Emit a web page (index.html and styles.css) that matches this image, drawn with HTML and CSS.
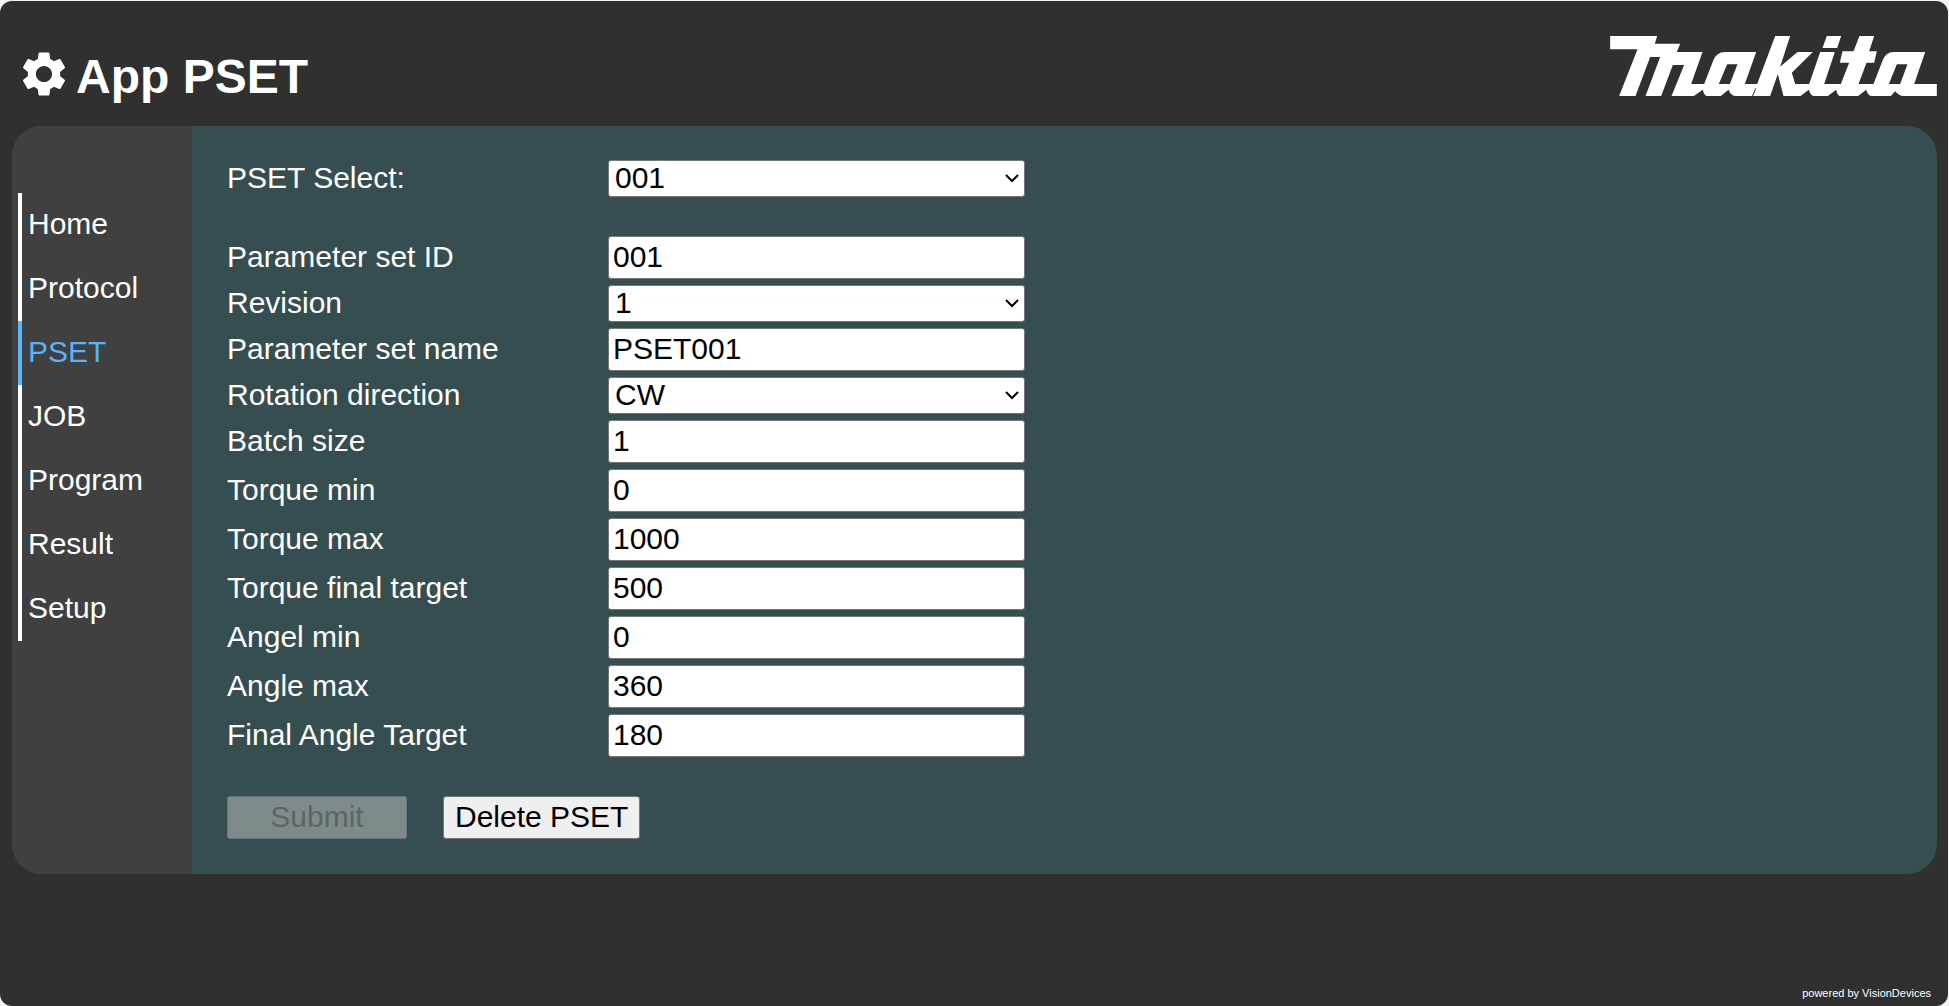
FILE: index.html
```html
<!DOCTYPE html>
<html lang="en">
<head>
<meta charset="utf-8">
<title>App PSET</title>
<link rel="stylesheet" href="styles.css">
</head>
<body>
<div class="app">
  <header class="header">
    <svg class="gear" viewBox="0 0 24 24" aria-hidden="true"><path d="M19.14,12.94c0.04-0.3,0.06-0.61,0.06-0.94c0-0.32-0.02-0.64-0.07-0.94l2.03-1.58c0.18-0.14,0.23-0.41,0.12-0.61l-1.92-3.32c-0.12-0.22-0.37-0.29-0.59-0.22l-2.39,0.96c-0.5-0.38-1.03-0.7-1.62-0.94L14.4,2.81c-0.04-0.24-0.24-0.41-0.48-0.41h-3.84c-0.24,0-0.43,0.17-0.47,0.41L9.25,5.35C8.66,5.59,8.12,5.92,7.63,6.29L5.24,5.33c-0.22-0.08-0.47,0-0.59,0.22L2.74,8.87C2.62,9.08,2.66,9.34,2.86,9.48l2.03,1.58C4.84,11.36,4.8,11.69,4.8,12s0.02,0.64,0.07,0.94l-2.03,1.58c-0.18,0.14-0.23,0.41-0.12,0.61l1.92,3.32c0.12,0.22,0.37,0.29,0.59,0.22l2.39-0.96c0.5,0.38,1.03,0.7,1.62,0.94l0.36,2.54c0.05,0.24,0.24,0.41,0.48,0.41h3.84c0.24,0,0.44-0.17,0.47-0.41l0.36-2.54c0.59-0.24,1.13-0.56,1.62-0.94l2.39,0.96c0.22,0.08,0.47,0,0.59-0.22l1.92-3.32c0.12-0.22,0.07-0.47-0.12-0.61L19.14,12.94z M12,15.6c-1.98,0-3.6-1.62-3.6-3.6s1.62-3.6,3.6-3.6s3.6,1.62,3.6,3.6S13.98,15.6,12,15.6z"/></svg>
    <h1 class="title">App PSET</h1>
    <svg class="logo" viewBox="60 108 980 180" role="img" aria-label="Makita"><path fill-rule="evenodd" d="M60 108H201L194 131H270L260 156H337L303 252H342L369 182Q379 156 404 156H498L464 252H501L555 108H600L570 200L622 156H668L605 218L615 252H657L690 156H734L702 252H752L777 188H749L757 154H790L808 108H852L837 154H860L852 188H829L805 252H850L877 182Q887 156 910 156H1005L972 252H1040V288H940Q927 288 915 274L902 288H845Q834 288 828 269L804 288H750Q742 288 738 269L713 288H672Q662 288 656 269L631 288H580L563 222L540 288H437Q423 288 415 269L392 288H352Q342 288 338 269L311 288H244L282 195H248L213 288H166L210 171H180L136 288H87L142 148H60ZM411 193L386 252H419L442 193ZM920 193L896 252H930L952 193ZM710 108H753L741 144H697Z"/><path class="logo-cut" d="M497 265L487 288"/></svg>
  </header>

  <div class="panel">
    <nav class="sidebar">
      <a class="nav-link" href="#home">Home</a>
      <a class="nav-link" href="#protocol">Protocol</a>
      <a class="nav-link active" href="#pset" aria-current="page">PSET</a>
      <a class="nav-link" href="#job">JOB</a>
      <a class="nav-link" href="#program">Program</a>
      <a class="nav-link" href="#result">Result</a>
      <a class="nav-link" href="#setup">Setup</a>
    </nav>

    <main class="content">
      <form class="form">
        <div class="fields">
          <label for="select">PSET Select:</label>
          <select id="select"><option>001</option></select>
        </div>
        <div class="fields">
          <label for="id">Parameter set ID</label>
          <input id="id" type="text" value="001">
          <label for="revision">Revision</label>
          <select id="revision"><option>1</option></select>
          <label for="name">Parameter set name</label>
          <input id="name" type="text" value="PSET001">
          <label for="rotation">Rotation direction</label>
          <select id="rotation"><option>CW</option><option>CCW</option></select>
          <label for="batch">Batch size</label>
          <input id="batch" type="number" value="1">
          <label for="torque-min">Torque min</label>
          <input id="torque-min" type="number" value="0">
          <label for="torque-max">Torque max</label>
          <input id="torque-max" type="number" value="1000">
          <label for="torque-target">Torque final target</label>
          <input id="torque-target" type="number" value="500">
          <label for="angle-min">Angel min</label>
          <input id="angle-min" type="number" value="0">
          <label for="angle-max">Angle max</label>
          <input id="angle-max" type="number" value="360">
          <label for="angle-target">Final Angle Target</label>
          <input id="angle-target" type="number" value="180">
        </div>
        <div class="actions">
          <button class="submit" type="submit" disabled>Submit</button>
          <button type="button">Delete PSET</button>
        </div>
      </form>
    </main>
  </div>

  <footer class="footer">powered by VisionDevices</footer>
</div>
</body>
</html>
```
FILE: styles.css
```css
* {
  box-sizing: border-box;
}

body {
  margin: 0;
  padding: 1px 1px 0 0;
  background: #f2f4f3;
  color: #fff;
  font-family: Arial, "Liberation Sans", sans-serif;
  font-size: 30px;
  line-height: 34px;
}

.app {
  display: flex;
  flex-direction: column;
  min-height: calc(100vh - 1px);
  padding: 0 11px 0 12px;
  border-radius: 12px;
  background: #303030;
}

.header {
  display: flex;
  align-items: center;
  height: 125px;
  padding: 20px 0 0 5px;
}

.gear {
  width: 54px;
  height: 54px;
  fill: #fff;
}

.title {
  margin: 6px 0 0 5px;
  font-size: 48px;
  line-height: 56px;
}

.logo {
  width: 327px;
  height: 60px;
  margin: 0 0 16px auto;
  fill: #fff;
}

.logo-cut {
  stroke: #303030;
  stroke-width: 3;
}

.panel {
  display: flex;
  overflow: hidden;
  border-radius: 30px;
  background: #374e50;
}

.sidebar {
  flex: none;
  width: 180px;
  padding: 67px 6px 0;
  background: #404040;
}

.nav-link {
  display: block;
  padding: 14px 6px 16px;
  border-left: 4px solid #fff;
  color: #fff;
  text-decoration: none;
}

.nav-link.active {
  border-color: #5ab4fa;
  color: #5ab4fa;
}

.content {
  flex: 1;
  padding: 34px 35px 35px;
}

.form {
  display: flex;
  flex-direction: column;
  gap: 39px;
}

.fields {
  display: grid;
  grid-template-columns: minmax(0, 381px) minmax(0, 417px);
  gap: 6px 0;
  align-items: center;
}

label {
  padding-bottom: 2px;
}

input,
select,
button {
  margin: 0;
  border: 1px solid #767676;
  border-radius: 3px;
  font: inherit;
}

input,
button {
  height: 43px;
}

input,
select {
  width: 100%;
  background-color: #fff;
  color: #000;
}

input {
  padding: 2px 4px 4px;
}

select {
  height: 37px;
  padding: 0 24px 2px 6px;
  appearance: none;
  background-image: url("data:image/svg+xml,%3Csvg xmlns='http://www.w3.org/2000/svg' width='14' height='9' viewBox='0 0 14 9'%3E%3Cpath d='M1 1l6 6 6-6' fill='none' stroke='black' stroke-width='2'/%3E%3C/svg%3E");
  background-repeat: no-repeat;
  background-position: right 5px center;
}

input[type="number"] {
  appearance: textfield;
}

.actions {
  display: flex;
  gap: 36px;
}

button {
  padding: 0 11px 2px;
  background: #efefef;
  color: #000;
}

.submit {
  width: 180px;
  border-color: #6b7879;
  background: #7f8b8b;
  color: #5b6666;
}

.footer {
  margin-top: auto;
  padding: 0 6px 6px;
  font-size: 11px;
  line-height: 14px;
  text-align: right;
}
```
